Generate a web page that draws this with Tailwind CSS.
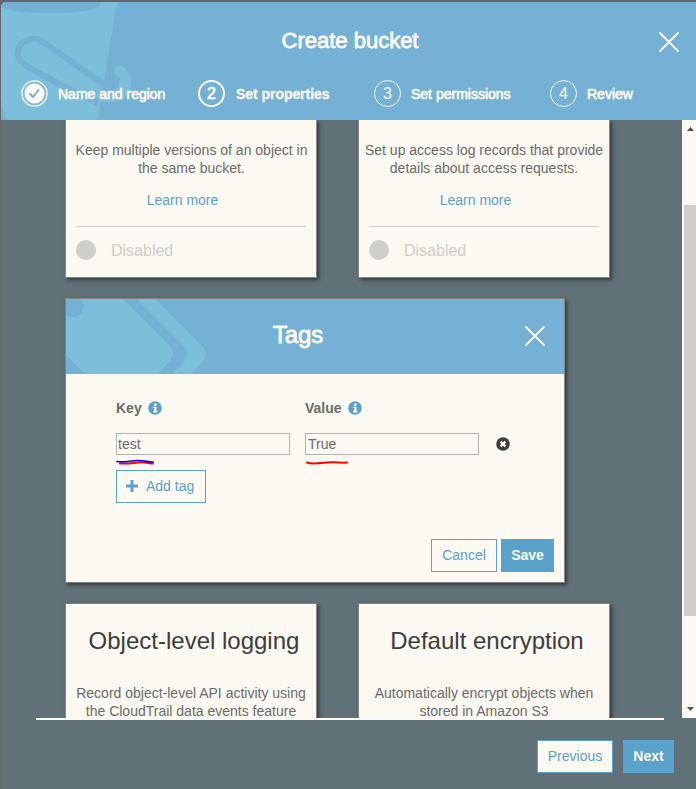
<!DOCTYPE html>
<html lang="en">
<head>
<meta charset="utf-8">
<title>Create bucket</title>
<script src="https://cdn.jsdelivr.net/npm/@tailwindcss/browser@4"></script>
</head>
<body class="w-[696px] h-[789px] overflow-hidden bg-[#626569] pt-[2px] pl-px font-['Liberation_Sans',Arial,sans-serif] text-[14px] leading-[18px] text-[#6b6b68]">
<div class="flex flex-col w-[695px] h-[787px] rounded-tl-[5px] overflow-hidden bg-[#617178]">

  <header class="relative h-[118px] shrink-0 bg-[#74b1d5] text-[#fcf8f2]">
    <svg class="absolute left-0 top-0" width="140" height="118" viewBox="1 2 140 118" fill="none">
      <path d="M1 2H117L98 117Q97.500 120 94 120H9Q5 120 4 115L1 100Z" fill="#7dbedb"/>
      <ellipse cx="50" cy="4" rx="51" ry="9.500" fill="#74b1d5"/>
      <path d="M98 95C114 100 126 94 125 83C124 76 123 73 120 71" stroke="#7dbedb" stroke-width="11.500"/>
      <circle cx="119.500" cy="71" r="5.500" fill="#7dbedb"/>
      <path d="M117 77C117 84 109 88 102 83L43 42C28 32 12 48 20 60C24 66 44 76 65 87L98 103" stroke="#74b1d5" stroke-width="6"/>
    </svg>
    <div class="relative flex flex-col h-full">
      <div class="flex justify-center pt-[26px] pl-[3px] h-[77px]">
        <h1 class="text-[22px] leading-[26px] [-webkit-text-stroke:0.8px_#fcf8f2]">Create bucket</h1>
        <svg class="absolute right-[16px] top-[29px]" width="22" height="22" viewBox="0 0 22 22" stroke="#fcf8f2" stroke-width="1.900" stroke-linecap="round"><path d="M2 2L20 20M20 2L2 20"/></svg>
      </div>
      <ol class="flex items-center h-[28px] pl-[20px] leading-[18px]">
        <li class="flex items-center w-[177px] gap-[10px]">
          <svg width="27" height="27" viewBox="0 0 27 27" fill="none"><circle cx="13.500" cy="13.500" r="12.600" stroke="#fcf8f2" stroke-width="1.300"/><circle cx="13.500" cy="13.500" r="10" fill="#fcf8f2"/><path d="M8.500 13.500L12 17L18 9.500" stroke="#74b1d5" stroke-width="2"/></svg>
          <span class="pt-[2px] [-webkit-text-stroke:0.7px_#fcf8f2]">Name and region</span>
        </li>
        <li class="flex items-center w-[176px] gap-[11px]">
          <span class="flex items-center justify-center size-[27px] rounded-full border-2 border-[#fcf8f2] text-[16px] pt-px [-webkit-text-stroke:0.7px_#fcf8f2]">2</span>
          <span class="pt-[2px] font-bold [-webkit-text-stroke:0.3px_#fcf8f2] tracking-[-0.05px]">Set properties</span>
        </li>
        <li class="flex items-center w-[176px] gap-[10px]">
          <span class="flex items-center justify-center size-[27px] rounded-full border border-[#fcf8f2] text-[16px] pt-px">3</span>
          <span class="pt-[2px] [-webkit-text-stroke:0.7px_#fcf8f2]">Set permissions</span>
        </li>
        <li class="flex items-center gap-[10px]">
          <span class="flex items-center justify-center size-[27px] rounded-full border border-[#fcf8f2] text-[16px] pt-px">4</span>
          <span class="pt-[2px] [-webkit-text-stroke:0.7px_#fcf8f2]">Review</span>
        </li>
      </ol>
    </div>
  </header>

  <main class="flex h-[598px] shrink-0 overflow-hidden">
    <div class="w-[681px] pl-[64px]">
      <div class="flex gap-[41px]">
        <section class="w-[252px] h-[158px] border border-t-0 border-[#85847f] bg-[#fcf8f2] shadow-[2px_2px_4px_rgba(0,0,0,0.5)] px-[10px] pt-[21px] text-center">
          <p class="whitespace-nowrap flex flex-col items-center pl-px"><span>Keep multiple versions of an object in</span><span>the same bucket.</span></p>
          <p class="mt-[14px] pr-[17px] text-[#5aa2cc]">Learn more</p>
          <div class="mt-[17px] border-t border-[#cfcec9] flex items-center gap-[15px] pt-[13px] text-[16px] leading-[20px] text-[#cfcec9]"><span class="size-[20px] rounded-full bg-[#cfcec9]"></span><span class="pt-px -mb-px">Disabled</span></div>
        </section>
        <section class="w-[252px] h-[158px] border border-t-0 border-[#85847f] bg-[#fcf8f2] shadow-[2px_2px_4px_rgba(0,0,0,0.5)] px-[10px] pt-[21px] text-center">
          <p class="whitespace-nowrap flex flex-col items-center"><span>Set up access log records that provide</span><span>details about access requests.</span></p>
          <p class="mt-[14px] pr-[17px] text-[#5aa2cc]">Learn more</p>
          <div class="mt-[17px] border-t border-[#cfcec9] flex items-center gap-[15px] pt-[13px] text-[16px] leading-[20px] text-[#cfcec9]"><span class="size-[20px] rounded-full bg-[#cfcec9]"></span><span class="pt-px -mb-px">Disabled</span></div>
        </section>
      </div>

      <section class="mt-[20px] w-[500px] h-[285px] border border-[#85847f] bg-[#fcf8f2] shadow-[2px_2px_4px_rgba(0,0,0,0.5)]">
        <div class="relative h-[75px] bg-[#74b1d5] text-[#fcf8f2] flex justify-center pt-[22px] pr-[34px]">
          <svg class="absolute left-0 top-0" width="142" height="75" viewBox="66 299 142 75">
            <path d="M66 299H123L170 346Q176 354 170 361L158 374H85L66 355Z" fill="#7dbedb"/>
            <path d="M137 299H156L203 347Q209 354 203 362L191 374H172L184 362Q190 354 184 346Z" fill="#7dbedb"/>
            <circle cx="73" cy="306" r="11" fill="#74b1d5"/>
          </svg>
          <h2 class="text-[24px] leading-[28px] [-webkit-text-stroke:0.8px_#fcf8f2]">Tags</h2>
          <svg class="absolute right-[18px] top-[26px]" width="22" height="22" viewBox="0 0 22 22" stroke="#fcf8f2" stroke-width="1.900" stroke-linecap="round"><path d="M2 2L20 20M20 2L2 20"/></svg>
        </div>
        <div class="pl-[50px] pt-[25px]">
          <div class="flex font-bold">
            <div class="flex items-center gap-[6px] w-[189px]">Key
              <svg width="14" height="14" viewBox="0 0 14 14"><circle cx="7" cy="7" r="6.800" fill="#5aa2cc"/><path d="M6 2.500H8.500V4.700H6ZM5 5.700H8.500V10H9.500V11.500H5V10H6V7H5Z" fill="#fcf8f2"/></svg>
            </div>
            <div class="flex items-center gap-[6px]">Value
              <svg width="14" height="14" viewBox="0 0 14 14"><circle cx="7" cy="7" r="6.800" fill="#5aa2cc"/><path d="M6 2.500H8.500V4.700H6ZM5 5.700H8.500V10H9.500V11.500H5V10H6V7H5Z" fill="#fcf8f2"/></svg>
            </div>
          </div>
          <div class="relative flex items-center mt-[16px]">
            <div class="w-[174px] h-[22px] border border-[#b3b2ad] pl-px leading-[20px]">test</div>
            <div class="ml-[15px] w-[174px] h-[22px] border border-[#b3b2ad] pl-[2px] leading-[20px]">True</div>
            <svg class="ml-[17px]" width="14" height="14" viewBox="0 0 14 14"><circle cx="7" cy="7" r="6.800" fill="#3d3d3b"/><path d="M4.600 4.600L9.400 9.400M9.400 4.600L4.600 9.400" stroke="#fcf8f2" stroke-width="2.300"/></svg>
            <svg class="absolute left-[-1px] top-[24px]" width="240" height="12" viewBox="115 457 240 12" fill="none" stroke-linecap="round" stroke-width="2">
              <path d="M120 463.500C130 464 135 462.300 142 462.300C148 462.300 149 463.500 153 463.500" stroke="#f00"/>
              <path d="M117 461.500C125 463 130 460.500 138 460.500C145 460.500 148 462 153 462" stroke="#00f" stroke-width="1.700"/>
              <path d="M307 462.500C313 465 321 462.500 332 462.300C338 462.200 342 463 347 462.500" stroke="#f00"/>
            </svg>
          </div>
          <button class="mt-[15px] flex items-center w-[90px] h-[33px] border border-[#5aa2cc] pl-[9px] pb-[2px] gap-[8px] text-[#5aa2cc]">
            <svg width="12" height="12" viewBox="0 0 12 12"><path d="M4.500 0H7.500V4.500H12V7.500H7.500V12H4.500V7.500H0V4.500H4.500Z" fill="#5aa2cc"/></svg>Add tag</button>
        </div>
        <div class="mt-[36px] flex justify-end gap-[4px] pr-[10px]">
          <button class="w-[66px] h-[33px] pb-[2px] border border-[#5aa2cc] text-[#5aa2cc]">Cancel</button>
          <button class="w-[53px] h-[33px] pb-[2px] bg-[#5aa2cc] font-bold text-[#fcf8f2]">Save</button>
        </div>
      </section>

      <div class="flex gap-[41px] mt-[20px]">
        <section class="w-[252px] h-[200px] border border-[#85847f] bg-[#fcf8f2] shadow-[2px_2px_4px_rgba(0,0,0,0.5)] pt-[23px] text-center">
          <h3 class="pl-[6px] text-[24px] leading-[28px] text-[#3d3d3b]">Object-level logging</h3>
          <p class="mt-[29px]">Record object-level API activity using<br>the CloudTrail data events feature</p>
        </section>
        <section class="w-[252px] h-[200px] border border-[#85847f] bg-[#fcf8f2] shadow-[2px_2px_4px_rgba(0,0,0,0.5)] pt-[23px] text-center">
          <h3 class="pl-[6px] text-[24px] leading-[28px] text-[#3d3d3b]">Default encryption</h3>
          <p class="mt-[29px]">Automatically encrypt objects when<br>stored in Amazon S3</p>
        </section>
      </div>
    </div>
    <div class="w-[14px] bg-[#fcf8f2] flex flex-col items-end justify-between">
      <svg class="shrink-0" width="12" height="85" viewBox="0 0 12 85"><path d="M3 11H10L6.500 7Z" fill="#505050"/></svg>
      <div class="w-[12px] h-[411px] bg-[#d2cec9]"></div>
      <svg class="shrink-0" width="12" height="102" viewBox="0 0 12 102"><path d="M3 91H10L6.500 95Z" fill="#505050"/></svg>
    </div>
  </main>

  <footer class="pl-[35px] pr-[22px]">
    <div class="w-[628px] h-[2px] bg-[#fcf8f2]"></div>
    <div class="flex justify-end gap-[10px] mt-[20px]">
      <button class="w-[76px] h-[33px] pb-[2px] border border-[#5aa2cc] bg-[#fcf8f2] text-[#5aa2cc]">Previous</button>
      <button class="w-[51px] h-[33px] pb-[2px] bg-[#5aa2cc] font-bold text-[#fcf8f2]">Next</button>
    </div>
  </footer>
</div>
</body>
</html>
